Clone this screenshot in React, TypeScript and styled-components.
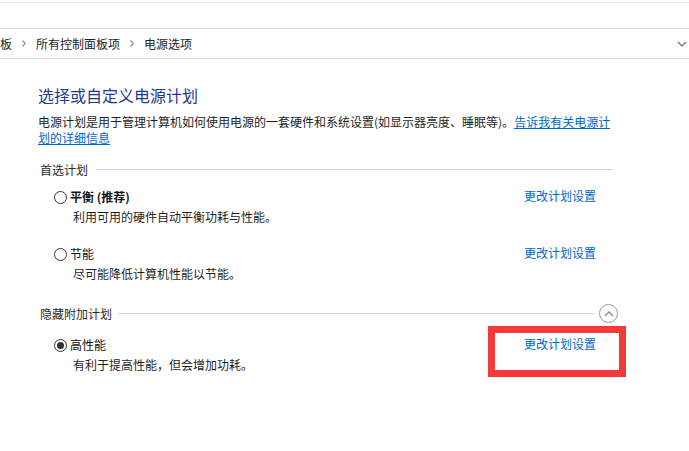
import React from 'react';
import styled, { createGlobalStyle } from 'styled-components';

const GlobalStyle = createGlobalStyle`
  html, body {
    margin: 0;
    padding: 0;
    background: #fff;
  }
  body {
    font-family: "Noto Sans CJK SC", "Microsoft YaHei", sans-serif;
    font-size: 12px;
    color: #1e1e1e;
  }
`;

const Page = styled.div`
  position: relative;
  width: 689px;
  height: 451px;
  overflow: hidden;
`;

const SearchStrip = styled.div`
  margin-top: 2px;
  height: 25px;
  border-top: 1px solid #e2e2e2;
`;

const AddressBar = styled.div`
  display: flex;
  align-items: center;
  height: 29px;
  border-top: 1px solid #dcdcdc;
  border-bottom: 1px solid #dcdcdc;
  line-height: 16px;
  color: #1e1e1e;
`;

const Crumb = styled.span`
  white-space: nowrap;
`;

const CrumbSep = styled.svg`
  width: 4px;
  height: 7px;
  margin: 0 10px;
  flex: none;
`;

const DropButton = styled.svg`
  margin-left: auto;
  margin-right: 2px;
  width: 10px;
  height: 6px;
`;

const Content = styled.div`
  width: 580px;
  padding: 26px 0 0 38px;
`;

const Title = styled.h1`
  margin: 0;
  font-size: 16px;
  font-weight: normal;
  line-height: 20px;
  color: #1e3a8e;
`;

const Intro = styled.p`
  margin: 9px 0 0;
  line-height: 16px;
  white-space: nowrap;
`;

const Link = styled.a<{ $underline?: boolean }>`
  color: #0066cc;
  text-decoration: ${(p) => (p.$underline ? 'underline' : 'none')};
  cursor: pointer;
  white-space: nowrap;
`;

const Section = styled.section<{ $top: number }>`
  margin-top: ${(p) => p.$top}px;
`;

const SectionHeader = styled.div<{ $toggle?: boolean }>`
  display: flex;
  align-items: center;
  height: 19px;
  padding-left: 2px;
  padding-right: ${(p) => (p.$toggle ? 0 : 5)}px;
  line-height: 16px;
  color: #2a2a2a;
`;

const Rule = styled.div<{ $gap: number }>`
  flex: 1;
  height: 1px;
  margin-left: ${(p) => p.$gap}px;
  background: #cfcfcf;
`;

const ToggleButton = styled.button`
  flex: none;
  display: flex;
  align-items: center;
  justify-content: center;
  width: 19px;
  height: 19px;
  margin-left: 5px;
  padding: 0;
  border: 1px solid #9a9a9a;
  border-radius: 50%;
  background: #fff;
`;

const PlanList = styled.div<{ $top: number }>`
  display: flex;
  flex-direction: column;
  gap: 21px;
  margin: ${(p) => p.$top}px 0 0 16px;
`;

const Plan = styled.div`
  display: grid;
  grid-template-columns: 470px auto;
  line-height: 16px;
`;

const PlanMain = styled.div`
  display: flex;
  flex-direction: column;
  gap: 4px;
`;

const PlanLabel = styled.label<{ $bold?: boolean }>`
  display: flex;
  align-items: center;
  font-weight: ${(p) => (p.$bold ? 700 : 400)};
  color: #111;
`;

const Radio = styled.span<{ $checked?: boolean }>`
  position: relative;
  flex: none;
  box-sizing: border-box;
  width: 13px;
  height: 13px;
  margin-right: 3px;
  border: 1px solid #333;
  border-radius: 50%;
  background: #fff;

  &::after {
    content: '';
    display: ${(p) => (p.$checked ? 'block' : 'none')};
    position: absolute;
    left: 2px;
    top: 2px;
    width: 7px;
    height: 7px;
    border-radius: 50%;
    background: #333;
  }
`;

const PlanDesc = styled.div`
  padding-left: 19px;
  color: #1e1e1e;
`;

const PlanLink = styled.div`
  margin-top: -1px;
`;

const Annotation = styled.div`
  position: absolute;
  left: 488px;
  top: 326px;
  width: 138px;
  height: 51px;
  box-sizing: border-box;
  border: 7px solid #f23a3a;
  pointer-events: none;
`;

interface PlanInfo {
  name: string;
  desc: string;
  bold?: boolean;
  checked?: boolean;
}

const preferred: PlanInfo[] = [
  { name: '平衡 (推荐)', desc: '利用可用的硬件自动平衡功耗与性能。', bold: true },
  { name: '节能', desc: '尽可能降低计算机性能以节能。' },
];

const hidden: PlanInfo[] = [
  { name: '高性能', desc: '有利于提高性能，但会增加功耗。', checked: true },
];

function PlanRow({ plan }: { plan: PlanInfo }) {
  return (
    <Plan>
      <PlanMain>
        <PlanLabel $bold={plan.bold}>
          <Radio $checked={plan.checked} />
          {plan.name}
        </PlanLabel>
        <PlanDesc>{plan.desc}</PlanDesc>
      </PlanMain>
      <PlanLink>
        <Link>更改计划设置</Link>
      </PlanLink>
    </Plan>
  );
}

function Sep() {
  return (
    <CrumbSep viewBox="0 0 4 7">
      <path d="M0.5 0.5 L3.3 3.5 L0.5 6.5" fill="none" stroke="#8a8a8a" strokeWidth="1.1" />
    </CrumbSep>
  );
}

export default function App() {
  return (
    <Page>
      <GlobalStyle />
      <SearchStrip />
      <AddressBar>
        <Crumb>板</Crumb>
        <Sep />
        <Crumb>所有控制面板项</Crumb>
        <Sep />
        <Crumb>电源选项</Crumb>
        <DropButton viewBox="0 0 10 6">
          <path d="M1 1 L5 5 L9 1" fill="none" stroke="#7a7a7a" strokeWidth="1.4" />
        </DropButton>
      </AddressBar>

      <Content>
        <Title>选择或自定义电源计划</Title>
        <Intro>
          电源计划是用于管理计算机如何使用电源的一套硬件和系统设置(如显示器亮度、睡眠等)。
          <Link $underline>告诉我有关电源计</Link>
          <br />
          <Link $underline>划的详细信息</Link>
        </Intro>

        <Section $top={14}>
          <SectionHeader>
            首选计划
            <Rule $gap={8} />
          </SectionHeader>
          <PlanList $top={10}>
            {preferred.map((p) => (
              <PlanRow key={p.name} plan={p} />
            ))}
          </PlanList>
        </Section>

        <Section $top={22}>
          <SectionHeader $toggle>
            隐藏附加计划
            <Rule $gap={6} />
            <ToggleButton>
              <svg width="10" height="6" viewBox="0 0 10 6">
                <path d="M1 5 L5 1 L9 5" fill="none" stroke="#8a8a8a" strokeWidth="1.3" />
              </svg>
            </ToggleButton>
          </SectionHeader>
          <PlanList $top={14}>
            {hidden.map((p) => (
              <PlanRow key={p.name} plan={p} />
            ))}
          </PlanList>
        </Section>
      </Content>

      <Annotation />
    </Page>
  );
}
